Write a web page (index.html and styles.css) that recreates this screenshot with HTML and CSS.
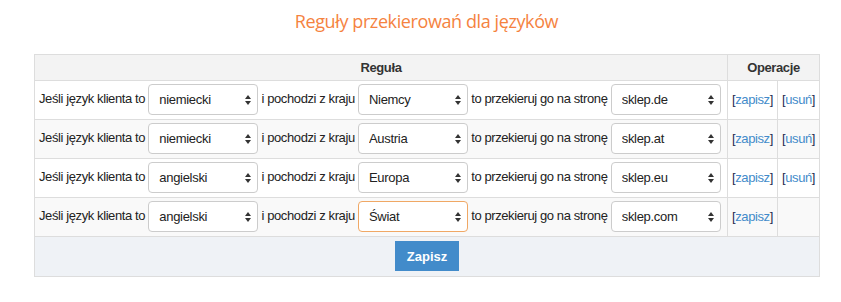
FILE: index.html
```html
<!DOCTYPE html>
<html lang="pl">
<head>
  <meta charset="UTF-8">
  <title>Reguły przekierowań dla języków</title>
  <link rel="stylesheet" href="styles.css">
</head>
<body>
  <div class="wrap">
    <h2 class="title">Reguły przekierowań dla języków</h2>
    <table class="rules">
      <colgroup>
        <col class="c-rule">
        <col class="c-save">
        <col class="c-del">
      </colgroup>
      <thead>
        <tr>
          <th>Reguła</th>
          <th colspan="2">Operacje</th>
        </tr>
      </thead>
      <tbody>
        <tr>
          <td class="rule">Jeśli język klienta to <span class="sel"><select><option>niemiecki</option></select></span> i pochodzi z kraju <span class="sel"><select><option>Niemcy</option></select></span> to przekieruj go na stronę <span class="sel"><select><option>sklep.de</option></select></span></td>
          <td class="op">[<a href="#">zapisz</a>]</td>
          <td class="op">[<a href="#">usuń</a>]</td>
        </tr>
        <tr>
          <td class="rule">Jeśli język klienta to <span class="sel"><select><option>niemiecki</option></select></span> i pochodzi z kraju <span class="sel"><select><option>Austria</option></select></span> to przekieruj go na stronę <span class="sel"><select><option>sklep.at</option></select></span></td>
          <td class="op">[<a href="#">zapisz</a>]</td>
          <td class="op">[<a href="#">usuń</a>]</td>
        </tr>
        <tr>
          <td class="rule">Jeśli język klienta to <span class="sel"><select><option>angielski</option></select></span> i pochodzi z kraju <span class="sel"><select><option>Europa</option></select></span> to przekieruj go na stronę <span class="sel"><select><option>sklep.eu</option></select></span></td>
          <td class="op">[<a href="#">zapisz</a>]</td>
          <td class="op">[<a href="#">usuń</a>]</td>
        </tr>
        <tr>
          <td class="rule">Jeśli język klienta to <span class="sel"><select><option>angielski</option></select></span> i pochodzi z kraju <span class="sel"><select class="focus"><option>Świat</option></select></span> to przekieruj go na stronę <span class="sel"><select><option>sklep.com</option></select></span></td>
          <td class="op">[<a href="#">zapisz</a>]</td>
          <td class="op"></td>
        </tr>
      </tbody>
      <tfoot>
        <tr>
          <td colspan="3" class="actions"><button class="btn">Zapisz</button></td>
        </tr>
      </tfoot>
    </table>
  </div>
</body>
</html>
```

FILE: styles.css
```css
body {
  margin: 0;
  padding: 0 22px 0 34px;
  background-color: #fff;
  color: #222;
  font-family: "Liberation Sans", Arial, sans-serif;
  font-size: 13px;
  letter-spacing: -0.4px;
}
.title {
  margin: 0;
  padding: 9px 0 0;
  height: 54px;
  box-sizing: border-box;
  text-align: center;
  font-family: "Open Sans", sans-serif;
  font-weight: normal;
  font-size: 18px;
  letter-spacing: -0.4px;
  color: #f5833f;
}
.rules {
  width: 785px;
  table-layout: fixed;
  border-collapse: collapse;
  border: 1px solid #ddd;
}
.c-rule {
  width: 693px;
}
.c-save {
  width: 50px;
}
.c-del {
  width: 42px;
}
.rules th {
  height: 25px;
  padding: 0 4px;
  background-color: #f3f3f3;
  border: 1px solid #ddd;
  font-weight: bold;
  color: #333;
  text-align: center;
}
.rules td {
  border: 1px solid #ddd;
  padding: 3px 4px 4px;
  height: 31px;
  white-space: nowrap;
}
.rules tbody tr:nth-child(even) td {
  background-color: #f9f9f9;
}
.op {
  color: #1c2a4f;
}
.rules td.op {
  padding-left: 4px;
  padding-right: 0;
}
.op a {
  color: #428bca;
  text-decoration: none;
}
.sel {
  position: relative;
  display: inline-block;
  vertical-align: middle;
}
.sel select {
  appearance: none;
  -webkit-appearance: none;
  width: 110px;
  height: 31px;
  padding: 0 20px 0 10px;
  border: 1px solid #ccc;
  border-radius: 4px;
  background-color: #fff;
  font-family: "Liberation Sans", Arial, sans-serif;
  font-size: 13px;
  letter-spacing: -0.3px;
  color: #222;
}
.sel select.focus {
  border-color: #f0a865;
}
.sel::before,
.sel::after {
  content: "";
  position: absolute;
  right: 7px;
  border-left: 3px solid transparent;
  border-right: 3px solid transparent;
  pointer-events: none;
}
.sel::before {
  top: 11px;
  border-bottom: 4px solid #333;
}
.sel::after {
  top: 17px;
  border-top: 4px solid #333;
}
.actions {
  text-align: center;
  background-color: #eff2f6;
}
.rules tfoot td {
  height: 32px;
}
.btn {
  background-color: #428bca;
  color: #fff;
  border: none;
  height: 30px;
  padding: 0 12px;
  font-family: "Liberation Sans", Arial, sans-serif;
  font-size: 13px;
  font-weight: bold;
  letter-spacing: 0;
  cursor: pointer;
}
```
